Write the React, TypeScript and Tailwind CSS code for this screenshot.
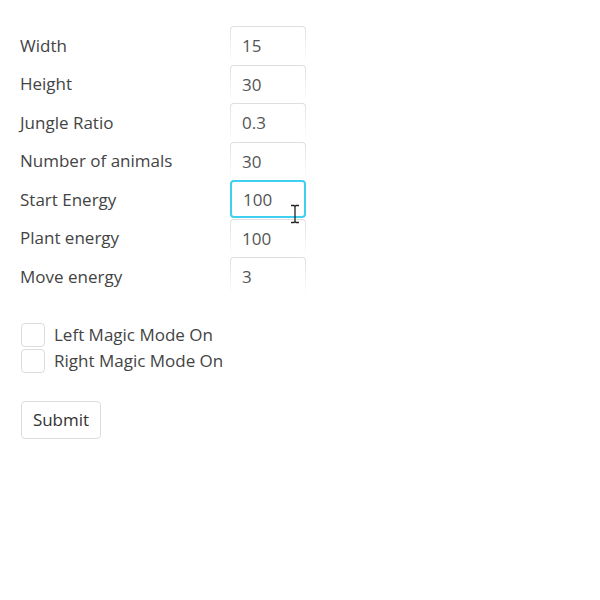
import React from "react";

const FIELDS = [
  { label: "Width", value: "15" },
  { label: "Height", value: "30" },
  { label: "Jungle Ratio", value: "0.3" },
  { label: "Number of animals", value: "30" },
  { label: "Start Energy", value: "100", focused: true },
  { label: "Plant energy", value: "100" },
  { label: "Move energy", value: "3" },
];

function Field({ label, value, focused }: { label: string; value: string; focused?: boolean }) {
  return (
    <div className="flex items-center h-[38.5px]">
      <label className="w-[210px] shrink-0">{label}</label>
      {focused ? (
        <div className="relative w-[76px] h-[38px] rounded-[4px] border-2 border-[#3fd0f0] bg-white flex items-center px-[11px] text-[#555]">
          {value}
          <svg className="absolute left-[58px] top-[22px]" width="10" height="20" viewBox="0 0 10 20">
            <path d="M1 1.5h3l1 1 1-1h3M5 2.5v15M1 18.5h3l1-1 1 1h3" fill="none" stroke="#222" strokeWidth="1.3" />
          </svg>
        </div>
      ) : (
        <div className="w-[76px] h-[38px] rounded-[4px] bg-gradient-to-b from-[#dedede] via-[#efefef] to-white pt-px px-px">
          <div className="h-full rounded-t-[3px] bg-white flex items-center px-[11px] text-[#555]">{value}</div>
        </div>
      )}
    </div>
  );
}

export default function App() {
  return (
    <div
      className="w-[600px] h-[600px] bg-white text-[17px] text-[#444] px-5 pt-[26px]"
      style={{ fontFamily: '"Open Sans", "Noto Sans", sans-serif' }}
    >
      <form className="flex flex-col">
        {FIELDS.map((f) => (
          <Field key={f.label} {...f} />
        ))}
        <div className="mt-[27px] flex flex-col gap-[2px] pl-px">
          {["Left Magic Mode On", "Right Magic Mode On"].map((t) => (
            <label key={t} className="flex items-center h-6 gap-[9px]">
              <span className="w-6 h-6 rounded-[4px] border border-[#dcdcdc] bg-white" />
              <span>{t}</span>
            </label>
          ))}
        </div>
        <div className="mt-[28px] pl-px">
          <button type="button" className="w-20 h-[38px] rounded-[4px] border border-[#dcdcdc] bg-white text-[#333]">
            Submit
          </button>
        </div>
      </form>
    </div>
  );
}
